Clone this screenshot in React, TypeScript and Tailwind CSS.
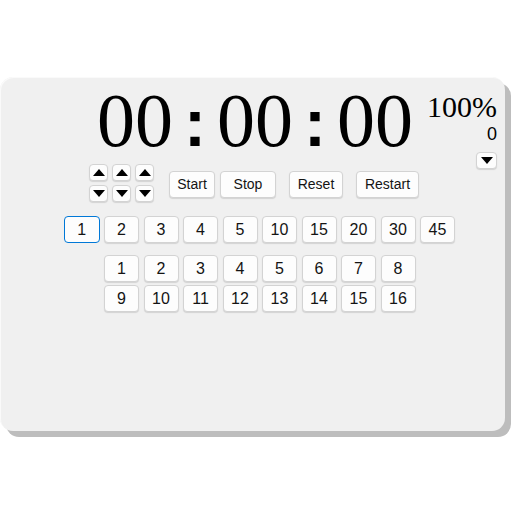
import React from "react";

const base =
  "flex items-center justify-center bg-[#fdfdfd] border rounded-[4px] text-[#141414]";
const btn = `${base} border-[#d3d3d3] shadow-[0_1px_1px_rgba(0,0,0,0.12)]`;
const focused = `${base} border-[#0078d7]`;

const Tri = ({ down }: { down?: boolean }) => (
  <svg width="12" height="7" viewBox="0 0 12 7">
    {down ? <path d="M0 0H12L6 7Z" fill="#000" /> : <path d="M0 7H12L6 0Z" fill="#000" />}
  </svg>
);

const Pair = () => <span className="w-[76px] text-center">00</span>;
const Colon = () => (
  <span className="font-bold text-[66px] leading-none" style={{ fontFamily: '"Liberation Sans", sans-serif' }}>
    :
  </span>
);

export default function App() {
  const quick = [1, 2, 3, 4, 5, 10, 15, 20, 30, 45];
  const row1 = [1, 2, 3, 4, 5, 6, 7, 8];
  const row2 = [9, 10, 11, 12, 13, 14, 15, 16];

  return (
    <div className="w-[512px] h-[512px] bg-white pt-[77px]" style={{ fontFamily: '"Liberation Sans", Arial, sans-serif' }}>
      <div className="w-[505px] h-[354px] bg-[#f0f0f0] rounded-[13px] shadow-[6px_6px_0_#bdbdbd,inset_1px_1px_0_#fafafa] pt-[5px] flex flex-col">
        {/* top: clock + controls, percent on the right */}
        <div className="flex items-start">
          <div className="ml-[89px] flex flex-col">
            <div
              className="ml-[8px] flex items-baseline gap-[11px] text-[76px] leading-none text-black"
              style={{ fontFamily: '"Liberation Serif", "Times New Roman", serif' }}
            >
              <Pair />
              <Colon />
              <Pair />
              <Colon />
              <Pair />
            </div>
            <div className="mt-[6px] flex items-start">
              <div className="grid grid-cols-3 gap-x-[4px] gap-y-[4px]">
                {[0, 1, 2].map((i) => (
                  <div key={"u" + i} className={`${btn} w-[19px] h-[17px]`}>
                    <Tri />
                  </div>
                ))}
                {[0, 1, 2].map((i) => (
                  <div key={"d" + i} className={`${btn} w-[19px] h-[17px]`}>
                    <Tri down />
                  </div>
                ))}
              </div>
              <div className="ml-[15px] mt-[7px] flex text-[14px]">
                <button className={`${btn} w-[46px] h-[27px]`}>Start</button>
                <button className={`${btn} w-[56px] h-[27px] ml-[5px]`}>Stop</button>
                <button className={`${btn} w-[54px] h-[27px] ml-[13px]`}>Reset</button>
                <button className={`${btn} w-[63px] h-[27px] ml-[13px]`}>Restart</button>
              </div>
            </div>
          </div>
          <div className="ml-auto mr-[8px] mt-[10px] flex flex-col items-end">
            <div className="text-[30px] leading-none text-black" style={{ fontFamily: '"Liberation Serif", serif' }}>
              100%
            </div>
            <div className="mt-[3px] text-[18px] leading-none text-black">0</div>
            <div className={`${btn} mt-[9px] w-[21px] h-[17px]`}>
              <Tri down />
            </div>
          </div>
        </div>

        {/* quick durations */}
        <div className="ml-[64px] mt-[14px] flex gap-[4.5px] text-[16px]">
          {quick.map((n, i) => (
            <button key={n} className={i === 0 ? `${focused} w-[35.5px] h-[27px]` : `${btn} w-[35px] h-[27px]`}>
              {n}
            </button>
          ))}
        </div>

        {/* numbered grid */}
        <div className="ml-[104px] mt-[12px] flex flex-col gap-[3px] text-[16px]">
          {[row1, row2].map((row, r) => (
            <div key={r} className="flex gap-[4.5px]">
              {row.map((n) => (
                <button key={n} className={`${btn} w-[35px] h-[27px]`}>
                  {n}
                </button>
              ))}
            </div>
          ))}
        </div>
      </div>
    </div>
  );
}
